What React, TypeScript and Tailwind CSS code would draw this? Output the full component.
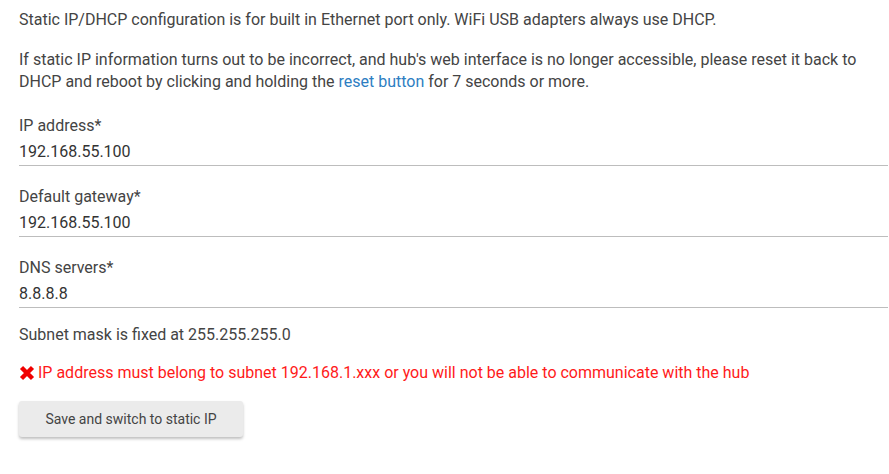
import React from "react";

const Field = ({ label, value }: { label: string; value: string }) => (
  <div className="pt-5 border-b border-[#bdbdbd]">
    <div className="leading-[22px]">{label}</div>
    <div className="mt-1 pb-[2px] leading-[22px] text-[#333]">{value}</div>
  </div>
);

export default function App() {
  return (
    <div className="min-h-screen bg-white pl-[19px] pr-px pt-[9px] font-['Roboto',sans-serif] text-[16px] text-[#444]">
      <p className="leading-[22px]">
        Static IP/DHCP configuration is for built in Ethernet port only. WiFi USB adapters always use DHCP.
      </p>
      <p className="mt-[18px] pr-[18px] leading-[22px]">
        If static IP information turns out to be incorrect, and hub's web interface is no longer accessible, please reset it back to
        DHCP and reboot by clicking and holding the <span className="text-[#2d7ec2]">reset button</span> for 7 seconds or more.
      </p>

      <div className="mt-[2px]">
        <Field label="IP address*" value="192.168.55.100" />
        <Field label="Default gateway*" value="192.168.55.100" />
        <Field label="DNS servers*" value="8.8.8.8" />
      </div>

      <p className="mt-4 leading-[22px]">Subnet mask is fixed at 255.255.255.0</p>

      <p className="mt-4 flex items-center gap-[3px] leading-[22px] text-[#ff1a1a]">
        <svg width="16" height="16" viewBox="0 0 16 16" className="shrink-0">
          <path d="M2.5 2.5 L13.5 13.5 M13.5 2.5 L2.5 13.5" stroke="#f00000" strokeWidth="4.4" strokeLinecap="butt" />
        </svg>
        IP address must belong to subnet 192.168.1.xxx or you will not be able to communicate with the hub
      </p>

      <button className="mt-[17px] h-9 w-[224px] rounded-[3px] bg-[#ebebeb] text-[14px] text-[#444] shadow-[0_2px_3px_rgba(0,0,0,0.25)]">
        Save and switch to static IP
      </button>
    </div>
  );
}
